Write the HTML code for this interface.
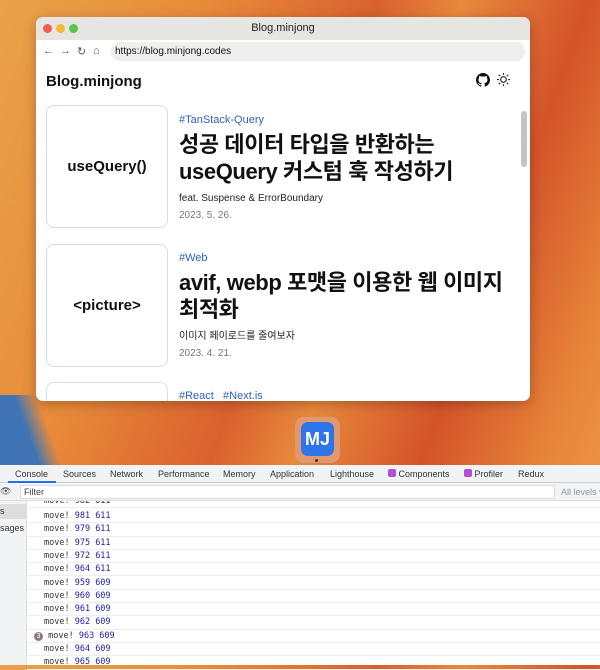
<!DOCTYPE html>
<html><head><meta charset="utf-8"><style>
*{margin:0;padding:0;box-sizing:border-box}
body{width:600px;height:665px;overflow:hidden;position:relative;font-family:"Liberation Sans","Noto Sans CJK KR",sans-serif;
background:linear-gradient(110deg,#e9a24a 0%,#e88a3a 25%,#d9612e 45%,#e8893c 55%,#d4532a 70%,#e7863a 85%,#f0a050 100%);}
.blue{position:absolute;left:0;top:395px;width:75px;height:75px;background:linear-gradient(70deg,#3f74b5 40%,transparent 62%)}
.win{position:absolute;left:36px;top:17px;width:494px;height:384px;background:#fff;border-radius:7px;overflow:hidden;box-shadow:0 3px 12px rgba(0,0,0,.25)}
.tb{height:23px;background:#e7e5e2;text-align:center;font-size:11px;line-height:23px;color:#222;position:relative}
.dot{position:absolute;top:7px;width:9px;height:9px;border-radius:50%}
.ub{height:23px;position:relative;background:#fff;font-size:10px;color:#555}
.url{position:absolute;left:75px;top:2px;width:414px;height:19px;background:#efefef;border-radius:9px;line-height:19px;padding-left:4px;color:#111;font-size:10px}
.nav{position:absolute;top:5px;font-size:11px;color:#555}
.c{position:absolute;left:0;top:46px;right:0;bottom:0}
.logo{position:absolute;left:10px;top:10px;font-weight:bold;font-size:15px;color:#111}
.thumb{position:absolute;left:10px;width:122px;height:123px;border:1px solid #d8dde3;border-radius:8px;display:flex;align-items:center;justify-content:center;font-weight:bold;font-size:15px;color:#111}
.tag{position:absolute;left:143px;font-size:11px;color:#2f5fc0}
.tt{position:absolute;left:143px;font-size:22px;font-weight:bold;line-height:27px;color:#111;letter-spacing:-.4px}
.sub{position:absolute;left:143px;font-size:10px;color:#222}
.dt{position:absolute;left:143px;font-size:10px;color:#777}
.sb{position:absolute;left:485px;top:48px;width:6px;height:56px;background:#c4c4c4;border-radius:3px}
.dock{position:absolute;left:295px;top:417px;width:45px;height:46px;background:#e0986e;border-radius:9px}
.mj{position:absolute;left:301px;top:422px;width:33px;height:34px;background:#2f74e8;border-radius:7px;color:#fff;font-size:18px;font-weight:bold;line-height:34px;text-align:center}
.dv{position:absolute;left:0;top:465px;width:600px;height:200px;background:#fff}
.tabs{height:18px;background:#f1f3f4;border-bottom:1px solid #ccc;font-size:9px;color:#333;position:relative}
.tabs span{position:absolute;top:4px}
.fl{height:18px;background:#f1f3f4;border-bottom:1px solid #ddd;position:relative;font-size:9px}
.side{position:absolute;left:0;top:36px;width:27px;height:164px;background:#f1f3f4;border-right:1px solid #ddd;font-size:9px;color:#333}
.row{position:absolute;left:27px;width:573px;height:13.3px;border-bottom:1px solid #eee;font-family:"DejaVu Sans Mono","Liberation Mono",monospace;font-size:8.5px;color:#333;padding-left:17px;line-height:13px}
.row b{font-weight:normal;color:#1c1caa}
</style></head><body>
<div class="blue"></div>
<div class="win">
<div class="tb"><div class="dot" style="left:7px;background:#ed5f56"></div><div class="dot" style="left:20px;background:#f4b83b"></div><div class="dot" style="left:33px;background:#5bc44a"></div>Blog.minjong</div>
<div class="ub"><span class="nav" style="left:7px">←</span><span class="nav" style="left:24px">→</span><span class="nav" style="left:41px">↻</span><span class="nav" style="left:57px">⌂</span><div class="url">https://blog.minjong.codes</div></div>
<div class="c">
<div class="logo">Blog.minjong</div>
<svg style="position:absolute;left:440px;top:10px" width="14" height="14" viewBox="0 0 16 16"><path fill="#111" d="M8 0C3.6 0 0 3.6 0 8c0 3.5 2.3 6.5 5.5 7.6.4.1.5-.2.5-.4v-1.4c-2.200.5-2.700-1-2.700-1-.4-.9-.9-1.200-.9-1.200-.7-.5.1-.5.1-.5.8.1 1.200.8 1.200.8.7 1.200 1.900.9 2.300.7.1-.5.3-.9.5-1.100-1.800-.2-3.600-.9-3.600-4 0-.9.3-1.600.8-2.100-.1-.2-.4-1 .1-2.100 0 0 .7-.2 2.200.8.6-.2 1.300-.3 2-.3s1.400.1 2 .3c1.500-1 2.200-.8 2.200-.8.4 1.100.2 1.900.1 2.100.5.6.8 1.300.8 2.100 0 3.100-1.900 3.700-3.600 3.900.3.3.5.8.5 1.500v2.200c0 .2.1.5.6.4C13.700 14.500 16 11.500 16 8c0-4.400-3.600-8-8-8z"/></svg>
<svg style="position:absolute;left:460px;top:9px" width="15" height="15" viewBox="0 0 16 16" stroke="#222" fill="none" stroke-width="1.2"><circle cx="8" cy="8" r="3"/><path d="M8 1v2M8 13v2M1 8h2M13 8h2M3 3l1.4 1.4M11.6 11.6L13 13M3 13l1.4-1.4M11.6 4.4L13 3"/></svg>
<div class="thumb" style="top:42px">useQuery()</div>
<div class="tag" style="top:51px">#TanStack-Query</div>
<div class="tt" style="top:68px">성공 데이터 타입을 반환하는<br>useQuery 커스텀 훅 작성하기</div>
<div class="sub" style="top:130px">feat. Suspense &amp; ErrorBoundary</div>
<div class="dt" style="top:147px">2023. 5. 26.</div>
<div class="thumb" style="top:181px">&lt;picture&gt;</div>
<div class="tag" style="top:189px">#Web</div>
<div class="tt" style="top:206px">avif, webp 포맷을 이용한 웹 이미지<br>최적화</div>
<div class="sub" style="top:264px">이미지 페이로드를 줄여보자</div>
<div class="dt" style="top:285px">2023. 4. 21.</div>
<div class="thumb" style="top:319px"></div>
<div class="tag" style="top:327px">#React &nbsp;&nbsp;#Next.is</div>
<div class="sb"></div>
</div></div>
<div class="dock"></div><div class="mj">MJ</div>
<div style="position:absolute;left:315px;top:459px;width:3px;height:3px;background:#333;border-radius:50%"></div>
<div class="dv">
<div class="tabs"><span style="left:15px">Console</span><span style="left:63px">Sources</span><span style="left:110px">Network</span><span style="left:158px">Performance</span><span style="left:223px">Memory</span><span style="left:270px">Application</span><span style="left:330px">Lighthouse</span><span style="left:388px;"><i style="display:inline-block;width:8px;height:8px;background:#b34fd6;border-radius:2px"></i> Components</span><span style="left:464px"><i style="display:inline-block;width:8px;height:8px;background:#b34fd6;border-radius:2px"></i> Profiler</span><span style="left:518px">Redux</span>
<div style="position:absolute;left:8px;top:16px;width:48px;height:2px;background:#1a73e8"></div></div>
<div class="fl"><span style="position:absolute;left:0;top:3px;color:#555">👁</span><div style="position:absolute;left:20px;top:2px;width:535px;height:14px;background:#fff;border:1px solid #ddd;padding-left:3px;line-height:12px;color:#444">Filter</div><span style="position:absolute;left:561px;top:4px;color:#999;white-space:nowrap">All levels ▾</span></div>
<div class="side"><div style="background:#ddd;height:15px;margin-top:3px;padding-top:2px">s</div><div style="padding-top:4px">sages</div></div>
<div class="row" style="top:36px;height:7px;overflow:hidden;line-height:0">move! 982 611</div>
<div class="row" style="top:45px">move! <b>981 611</b></div>
<div class="row" style="top:58.3px">move! <b>979 611</b></div>
<div class="row" style="top:71.6px">move! <b>975 611</b></div>
<div class="row" style="top:84.9px">move! <b>972 611</b></div>
<div class="row" style="top:98.2px">move! <b>964 611</b></div>
<div class="row" style="top:111.5px">move! <b>959 609</b></div>
<div class="row" style="top:124.8px">move! <b>960 609</b></div>
<div class="row" style="top:138.1px">move! <b>961 609</b></div>
<div class="row" style="top:151.4px">move! <b>962 609</b></div>
<div class="row" style="top:164.7px;padding-left:7px"><i style="display:inline-block;width:9px;height:9px;border-radius:50%;background:#8a7a80;color:#fff;font-size:7px;line-height:9px;text-align:center;font-style:normal">3</i> move! <b>963 609</b></div>
<div class="row" style="top:178px">move! <b>964 609</b></div>
<div class="row" style="top:191.3px">move! <b>965 609</b></div>
</div>
</body></html>
